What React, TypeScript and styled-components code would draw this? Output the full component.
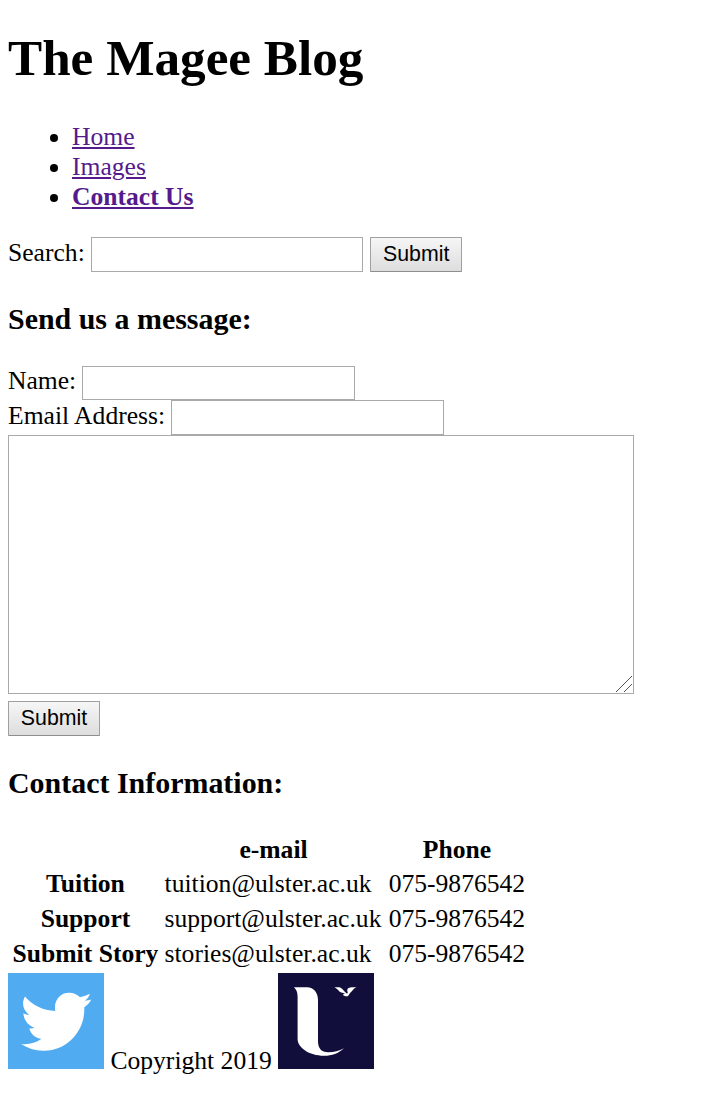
import React from 'react';
import styled, { createGlobalStyle } from 'styled-components';

const GlobalStyle = createGlobalStyle`
  body {
    margin: 0;
    background: #fff;
    color: #000;
    font-family: "Liberation Serif", "Times New Roman", serif;
    font-size: 25.6px;
    line-height: 30px;
  }
`;

const Page = styled.main`
  padding: 29px 8px 40px;
`;

const Title = styled.h1`
  margin: 0 0 36px;
  font-size: 51.2px;
  line-height: 57px;
`;

const Menu = styled.ul`
  margin: 0 0 25px;
  padding-left: 64px;
`;

const MenuLink = styled.a<{ $current?: boolean }>`
  color: #551a8b;
  text-decoration: underline;
  text-decoration-thickness: 2px;
  text-underline-offset: 2px;
  font-weight: ${(p) => (p.$current ? 'bold' : 'normal')};
`;

const Heading = styled.h3`
  margin: 0;
  padding-bottom: 2px;
  font-size: 29.95px;
  line-height: 32px;
`;

const Field = styled.label<{ $height?: number; $line?: number }>`
  display: flex;
  height: ${(p) => p.$height ?? 35}px;
  line-height: ${(p) => p.$line ?? 31}px;
  white-space: pre;
`;

const TextInput = styled.input<{ $width?: number; $gap?: number }>`
  box-sizing: border-box;
  width: ${(p) => p.$width ?? 273}px;
  height: 100%;
  margin: 0 0 0 ${(p) => p.$gap ?? 5.7}px;
  padding: 2px;
  border: 1px solid #a9a9a9;
  border-radius: 0;
  background: #fff;
  font: 21.33px "Liberation Sans", Arial, sans-serif;
  outline: none;
`;

const SearchBar = styled.form`
  display: flex;
  gap: 7px;
  margin-bottom: 31px;
`;

const Button = styled.button`
  box-sizing: border-box;
  width: 92px;
  height: 35px;
  margin: 0;
  padding: 0 0 1px;
  border: 1px solid #a0a0a0;
  border-bottom-color: #8e8e8e;
  border-radius: 1px;
  background: linear-gradient(#f6f6f6, #dddddd);
  color: #000;
  font: 21.33px/30px "Liberation Sans", Arial, sans-serif;
`;

const MessageForm = styled.form`
  display: flex;
  flex-direction: column;
  align-items: flex-start;
  margin: 29px 0 31px;
`;

const MessageBox = styled.div`
  box-sizing: border-box;
  display: flex;
  align-items: flex-end;
  width: 626px;
  height: 259px;
  margin-bottom: 7px;
  border: 1px solid #a9a9a9;
`;

const MessageText = styled.textarea`
  box-sizing: border-box;
  flex: 1;
  height: 100%;
  padding: 3px;
  border: 0;
  resize: none;
  outline: none;
  background: transparent;
  font: 21.33px "Liberation Mono", monospace;
`;

const Grip = styled.svg`
  flex: none;
  width: 18px;
  height: 18px;
`;

const Contacts = styled.table`
  margin-top: 30px;
  border-collapse: separate;
  border-spacing: 3.2px;
  line-height: 28.6px;

  th,
  td {
    padding: 1.6px;
  }

  td:nth-child(2) {
    padding-right: 2.6px;
  }
`;

const Footer = styled.footer`
  display: flex;
  align-items: flex-end;
  gap: 6.4px;
`;

const Logo = styled.svg`
  display: block;
  width: 96px;
  height: 96px;
`;

const Copyright = styled.span`
  line-height: 30px;
  margin-bottom: -7px;
`;

const contacts = [
  { name: 'Tuition', email: 'tuition@ulster.ac.uk', phone: '075-9876542' },
  { name: 'Support', email: 'support@ulster.ac.uk', phone: '075-9876542' },
  { name: 'Submit Story', email: 'stories@ulster.ac.uk', phone: '075-9876542' },
];

export default function App() {
  return (
    <>
      <GlobalStyle />
      <Page>
        <Title>The Magee Blog</Title>
        <Menu>
          <li><MenuLink href="#home">Home</MenuLink></li>
          <li><MenuLink href="#images">Images</MenuLink></li>
          <li><MenuLink href="#contact" $current>Contact Us</MenuLink></li>
        </Menu>

        <SearchBar>
          <Field>Search:<TextInput $width={272} $gap={6.4} /></Field>
          <Button type="button">Submit</Button>
        </SearchBar>

        <Heading>Send us a message:</Heading>
        <MessageForm>
          <Field $height={34} $line={29}>Name:<TextInput /></Field>
          <Field>Email Address:<TextInput /></Field>
          <MessageBox>
            <MessageText aria-label="Message" />
            <Grip viewBox="0 0 18 18" shapeRendering="crispEdges">
              <path d="M1 17L17 1M9 17L17 9" stroke="#555" fill="none" />
            </Grip>
          </MessageBox>
          <Button type="button">Submit</Button>
        </MessageForm>

        <Heading>Contact Information:</Heading>
        <Contacts>
          <thead>
            <tr><td /><th>e-mail</th><th>Phone</th></tr>
          </thead>
          <tbody>
            {contacts.map((c) => (
              <tr key={c.name}>
                <th>{c.name}</th>
                <td>{c.email}</td>
                <td>{c.phone}</td>
              </tr>
            ))}
          </tbody>
        </Contacts>

        <Footer>
          <Logo viewBox="0 0 96 96" aria-label="Twitter">
            <rect width="96" height="96" fill="#50abf1" />
            <path
              fill="#fff"
              d="M17 23.5C24 32 35 37.5 47.2 38C45.5 27.5 52 19.7 61 19.7C65.5 19.7 69.5 21.5 72 24.2C75.5 23.6 79 22.4 82 20.8C81 23.8 79.3 26 76.8 27.8C79 27.7 81.2 27.2 83.3 26.5C81.6 29.5 79.5 32 76.3 34.3C76.8 47 72 59 62.5 67.5C53 76 43 78 35 77.7C27 77.6 19.5 75.2 13 71C20.5 71.8 27.5 70.3 33.5 65.8C27.5 65 22.5 61 21.3 55.2C23 55.6 25 55.4 26.5 54.7C20 52.5 15.7 47 15.4 40.3C17.3 41.4 19.3 42 21.3 42C15 37.5 13.3 30 17 23.5Z"
            />
          </Logo>
          <Copyright>Copyright 2019</Copyright>
          <Logo viewBox="0 0 96 96" aria-label="Ulster University">
            <rect width="96" height="96" fill="#120e3b" />
            <path
              fill="#fff"
              d="M16 14.3H29C36 14.5 40 20 40 27V68C40 75.5 43.5 79.3 50 79.3C55.5 79.4 61 78 66 75.3C60.5 80.5 54 82.8 46 82.8C31 82.6 19.6 74.5 19.6 66V24C19.6 19 18.5 17 16 14.3Z"
            />
            <path
              fill="#fff"
              d="M56.5 14.3H61C64.5 14.5 66 19.3 69.3 20.6C70.4 19.8 69.2 18.5 69.2 17.2C69.3 15 71.5 14.3 74 14.3H78.5C75.3 15.2 74.5 18 72.5 19.5C71.2 20.7 71 22.5 69.7 23.3C67.5 23.5 65.3 23 64.8 21.3C66 21.2 67 21.2 67.2 20.5C64.5 19.8 61.8 19.3 60.5 17.5C59.5 16 58 15.3 56.5 14.3Z"
            />
          </Logo>
        </Footer>
      </Page>
    </>
  );
}
